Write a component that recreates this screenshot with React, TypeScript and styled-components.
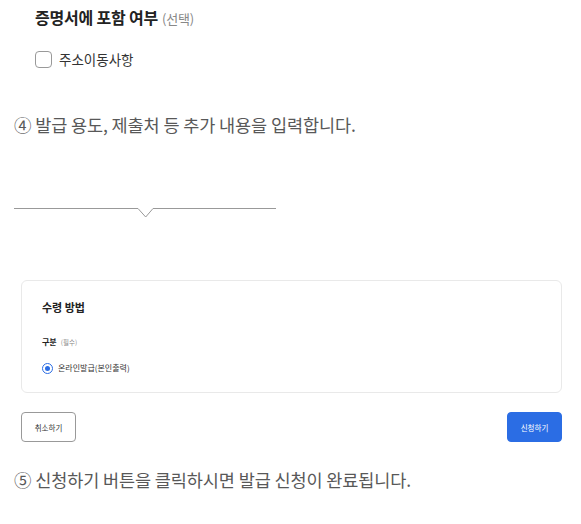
import React from "react";
import styled, { createGlobalStyle } from "styled-components";

const GlobalStyle = createGlobalStyle`
  html, body { margin: 0; padding: 0; background: #ffffff; }
  body { font-family: "Noto Sans CJK KR", "Noto Sans", sans-serif; }
  * { box-sizing: border-box; }
`;

const Page = styled.div`
  width: 581px;
  padding: 0 19px 0 14px;
  display: flex;
  flex-direction: column;
`;

const Option = styled.section`
  padding: 7px 0 0 21px;
  display: flex;
  flex-direction: column;
`;

const OptionTitle = styled.h3`
  margin: 0;
  height: 20px;
  display: flex;
  align-items: baseline;
  font-size: 16px;
  line-height: 20px;
  font-weight: 700;
  color: #222;
  letter-spacing: -0.2px;
`;

const Muted = styled.span<{ $size: number }>`
  font-size: ${(p) => p.$size}px;
  line-height: 1;
  font-weight: 400;
  color: #888;
  margin-left: 4px;
`;

const CheckRow = styled.label`
  margin-top: 24px;
  display: flex;
  align-items: center;
  gap: 7px;
  font-size: 13.5px;
  line-height: 17px;
  color: #333;
`;

const CheckBox = styled.span`
  width: 17px;
  height: 17px;
  border: 1px solid #999;
  border-radius: 4px;
  background: #fff;
`;

const StepText = styled.p<{ $top: number }>`
  margin: ${(p) => p.$top}px 0 0;
  font-size: 17.5px;
  line-height: 24px;
  font-weight: 400;
  color: #585858;
  letter-spacing: -0.1px;
`;

const Divider = styled.svg`
  display: block;
  margin-top: 71px;
  width: 262px;
  height: 11px;
  overflow: visible;
`;

const Card = styled.div`
  margin: 61px 0 0 7px;
  border: 1px solid #e9e9e9;
  border-radius: 6px;
  padding: 18px 20px 18px;
  display: flex;
  flex-direction: column;
`;

const CardTitle = styled.h4`
  margin: 0;
  font-size: 11px;
  line-height: 16px;
  font-weight: 700;
  color: #222;
`;

const FieldLabel = styled.div`
  margin-top: 21px;
  height: 12px;
  display: flex;
  align-items: baseline;
  font-size: 8px;
  line-height: 12px;
  font-weight: 700;
  color: #222;
`;

const RadioRow = styled.label`
  margin-top: 14px;
  display: flex;
  align-items: center;
  gap: 5px;
  font-size: 8px;
  line-height: 12px;
  color: #333;
`;

const Radio = styled.span`
  width: 11px;
  height: 11px;
  border: 1px solid #2b6de4;
  border-radius: 50%;
  display: flex;
  align-items: center;
  justify-content: center;
  &::after {
    content: "";
    width: 5px;
    height: 5px;
    border-radius: 50%;
    background: #2b6de4;
  }
`;

const ButtonRow = styled.div`
  margin: 19px 0 0 7px;
  display: flex;
  justify-content: space-between;
`;

const Button = styled.button<{ $primary?: boolean }>`
  width: 55px;
  height: 30px;
  border-radius: 4px;
  font-family: inherit;
  font-size: 7.5px;
  padding: 0;
  border: 1px solid ${(p) => (p.$primary ? "#2b6de4" : "#999")};
  background: ${(p) => (p.$primary ? "#2b6de4" : "#fff")};
  color: ${(p) => (p.$primary ? "#fff" : "#333")};
`;

export default function App() {
  return (
    <>
      <GlobalStyle />
      <Page>
        <Option>
          <OptionTitle>
            증명서에 포함 여부<Muted $size={13}>(선택)</Muted>
          </OptionTitle>
          <CheckRow>
            <CheckBox />
            주소이동사항
          </CheckRow>
        </Option>
        <StepText $top={45}>④ 발급 용도, 제출처 등 추가 내용을 입력합니다.</StepText>
        <Divider viewBox="0 0 262 11">
          <path d="M0 0.5 H124 L131.7 9 L139 0.5 H262" fill="none" stroke="#999" strokeWidth="1" />
        </Divider>
        <Card>
          <CardTitle>수령 방법</CardTitle>
          <FieldLabel>
            구분<Muted $size={6.5}>(필수)</Muted>
          </FieldLabel>
          <RadioRow>
            <Radio />
            온라인발급(본인출력)
          </RadioRow>
        </Card>
        <ButtonRow>
          <Button>취소하기</Button>
          <Button $primary>신청하기</Button>
        </ButtonRow>
        <StepText $top={26}>⑤ 신청하기 버튼을 클릭하시면 발급 신청이 완료됩니다.</StepText>
      </Page>
    </>
  );
}
